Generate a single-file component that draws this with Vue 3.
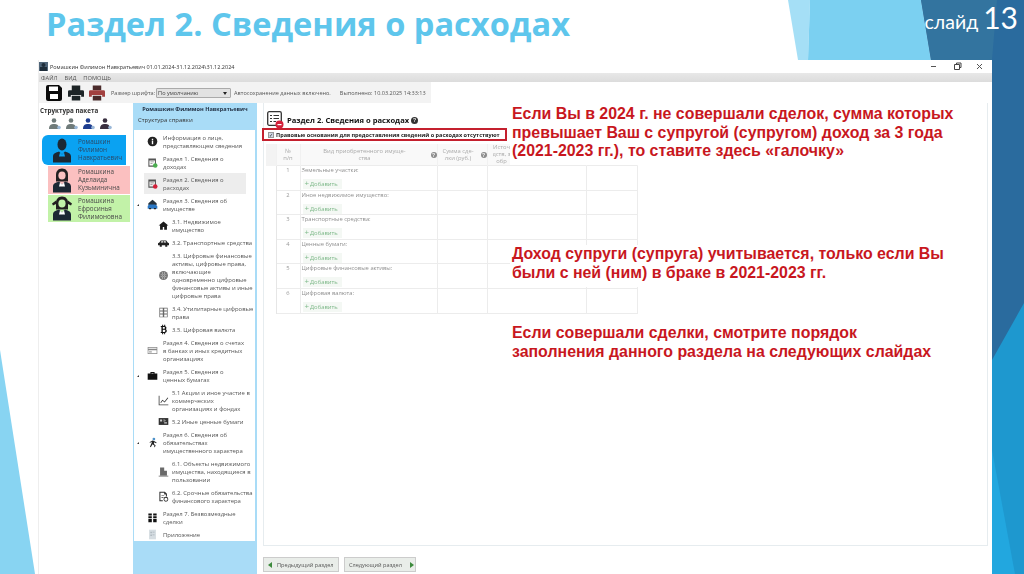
<script setup>
const icons = {
  info: [{ d: 'M8 1a7 7 0 1 0 0 14A7 7 0 0 0 8 1z', f: '#222' }, { d: 'M7 7h2v5H7zM7 4h2v2H7z', f: '#fff' }],
  docG: [{ d: 'M2 2h11v12H2zM3.5 5v7.500h8V5z', f: '#555' }, { d: 'M5 6.500h5v1H5zM5 9h3v1H5z', f: '#888' }, { d: 'M12 9a3.300 3.300 0 1 0 0 6.600A3.300 3.300 0 0 0 12 9z', f: '#4caf50' }],
  docR: [{ d: 'M2 2h11v12H2zM3.500 5v7.500h8V5z', f: '#555' }, { d: 'M5 6.500h5v1H5zM5 9h3v1H5z', f: '#888' }, { d: 'M12 9a3.300 3.300 0 1 0 0 6.600A3.300 3.300 0 0 0 12 9z', f: '#d3203a' }],
  estate: [{ d: 'M8 1l6 5v3H2V6z', f: '#26323c' }, { d: 'M1 10l2-2h9l3 2v4H1z', f: '#2a77c4' }, { d: 'M3 13h3v2H3zM10 13h3v2h-3z', f: '#222' }],
  home: [{ d: 'M8 2L1 8h2v6h4v-4h2v4h4V8h2z', f: '#1c1c1c' }],
  car: [{ d: 'M4 5h8l2 3 2 1v3H0V9l2-1z', f: '#222' }, { d: 'M5 6h2.500v2H4zM8.500 6H11l1 2H8.500z', f: '#fff' }, { d: 'M2.500 11h3v3h-3zM10.500 11h3v3h-3z', f: '#222' }],
  coin: [{ d: 'M8 1.500a6.500 6.500 0 1 0 0 13 6.500 6.500 0 0 0 0-13z', f: '#777' }, { d: 'M4 6h8v1H4zM4 9h8v1H4zM6 3h1v10H6zM9 3h1v10H9z', f: '#bbb' }],
  grid: [{ d: 'M2 1h12v14H2zM3 2v3h4V2zM9 2v3h4V2zM3 6.500v3h4v-3zM9 6.500v3h4v-3zM3 11v3h4v-3zM9 11v3h4v-3z', f: '#666' }],
  btc: [{ d: 'M4 3h2V1h1.500v2H9V1h1.500v2.100c2 .5 2.500 3.400.8 4.500 2.200.9 2 5-1 5.300V15H9v-2H7.500v2H6v-2H4v-1.500h1v-7H4zM7 4.500V7h2c1.500 0 1.500-2.500 0-2.500zM7 8.500v3h2.500c1.600 0 1.600-3 0-3z', f: '#111' }],
  card: [{ d: 'M1 3h14v10H1zM2 4v1.500h12V4zM2 7.500V12h12V7.500z', f: '#888' }, { d: 'M3 9h4v2H3z', f: '#aaa' }],
  bag: [{ d: 'M5 5V3h6v2h4v9H1V5zM6.500 5h3V4.200h-3z', f: '#111' }],
  chart: [{ d: 'M1 1h1.200v12.800H15V15H1z', f: '#444' }, { d: 'M3.500 11l3-4 3 2.500L14 3.500l.9.700-5.200 6.800-3-2.500-2.300 3z', f: '#333' }],
  paper: [{ d: 'M1 3h14v10H1z', f: '#333' }, { d: 'M3 5h3v3H3zM9 9h4v2H9z', f: '#ccc' }, { d: 'M8 4l4 3-4 2z', f: '#888' }],
  run: [{ d: 'M10 1a2 2 0 1 0 0 4 2 2 0 0 0 0-4z', f: '#4f92c9' }, { d: 'M8 5l3 1 3 2-.7 1-2.800-1.500L10 10l2.500 2-1 3-1.200-.3.700-2-3-2-2.500 4.300L4.300 14l2.500-5.500V7L4.500 8.500 3.500 7.500z', f: '#222' }],
  bldg: [{ d: 'M4 2h5v5h4v7H3V2z', f: '#6a6a6a' }, { d: 'M1 14h14v1.500H1z', f: '#888' }],
  docPen: [{ d: 'M2 1h8l3 3v4h-1.500V5H9V2.500H3.500v11H7V15H2z', f: '#333' }, { d: 'M5 6h4v1H5zM5 9h3v1H5z', f: '#333' }, { d: 'M11.500 8.500a3.500 3.500 0 1 0 0 7 3.500 3.500 0 0 0 0-7zm0 1.200a2.300 2.300 0 1 1 0 4.600 2.300 2.300 0 0 1 0-4.600z', f: '#333' }],
  gift: [{ d: 'M2 2h5v3H2zM9 2h5v3H9zM2 6h5v3H2zM9 6h5v3H9zM2 10h5v5H2zM9 10h5v5H9z', f: '#111' }],
  app: [{ d: 'M3 1h10v14H3z', f: '#d6dde2' }, { d: 'M5 4h2v2H5zM5 8h2v2H5zM8 4h3v1H8zM8 8h3v1H8z', f: '#aab4ba' }]
}

const tree = [
  { lines: ['Информация о лице,', 'представляющем сведения'], icon: 'info', lv: 0 },
  { lines: ['Раздел 1. Сведения о', 'доходах'], icon: 'docG', lv: 0 },
  { lines: ['Раздел 2. Сведения о', 'расходах'], icon: 'docR', lv: 0, active: true },
  { lines: ['Раздел 3. Сведения об', 'имуществе'], icon: 'estate', lv: 0, open: true },
  { lines: ['3.1. Недвижимое', 'имущество'], icon: 'home', lv: 1 },
  { lines: ['3.2. Транспортные средства'], icon: 'car', lv: 1 },
  { lines: ['3.3. Цифровые финансовые', 'активы, цифровые права,', 'включающие', 'одновременно цифровые', 'финансовые активы и иные', 'цифровые права'], icon: 'coin', lv: 1 },
  { lines: ['3.4. Утилитарные цифровые', 'права'], icon: 'grid', lv: 1 },
  { lines: ['3.5. Цифровая валюта'], icon: 'btc', lv: 1 },
  { lines: ['Раздел 4. Сведения о счетах', 'в банках и иных кредитных', 'организациях'], icon: 'card', lv: 0 },
  { lines: ['Раздел 5. Сведения о', 'ценных бумагах'], icon: 'bag', lv: 0, open: true },
  { lines: ['5.1 Акции и иное участие в', 'коммерческих', 'организациях и фондах'], icon: 'chart', lv: 1 },
  { lines: ['5.2 Иные ценные бумаги'], icon: 'paper', lv: 1 },
  { lines: ['Раздел 6. Сведения об', 'обязательствах', 'имущественного характера'], icon: 'run', lv: 0, open: true },
  { lines: ['6.1. Объекты недвижимого', 'имущества, находящиеся в', 'пользовании'], icon: 'bldg', lv: 1 },
  { lines: ['6.2. Срочные обязательства', 'финансового характера'], icon: 'docPen', lv: 1 },
  { lines: ['Раздел 7. Безвозмездные', 'сделки'], icon: 'gift', lv: 0 },
  { lines: ['Приложение'], icon: 'app', lv: 0 }
]

const people = [
  { cls: 'blue', lines: ['Ромашкин', 'Филимон', 'Навкратьевич'], woman: false },
  { cls: 'pink', lines: ['Ромашкина', 'Аделаида', 'Кузьминична'], woman: true },
  { cls: 'green', lines: ['Ромашкина', 'Ефросинья', 'Филимоновна'], woman: true, tails: true }
]

const miniColors = ['#6f7b7a', '#6f7b7a', '#1d3d8f', '#3a3040']
const rows = ['Земельные участки:', 'Иное недвижимое имущество:', 'Транспортные средства:', 'Ценные бумаги:', 'Цифровые финансовые активы:', 'Цифровая валюта:']
</script>

<template>
  <div class="slide">
    <svg class="decor" width="1024" height="574" viewBox="0 0 1024 574">
      <polygon points="788,0 810,0 808,60 798,60" fill="#a5dff6" />
      <polygon points="810,0 921,0 931,60 808,60" fill="#7bd0f1" />
      <polygon points="921,0 1024,0 1024,574 992,574 992,60 931,60" fill="#2a6b9e" />
      <polygon points="921,0 997,0 992,60 931,60" fill="#33749f" />
      <polygon points="1024,303 1024,574 992,574 992,360" fill="#1e98cf" />
      <polygon points="992,450 1015,574 992,574" fill="#22a7df" />
      <polygon points="0,350 35,574 0,574" fill="#88d4f2" />
    </svg>

    <header class="head">
      <h1>Раздел 2. Сведения о расходах</h1>
      <div class="slide-no">слайд <span>13</span></div>
    </header>

    <section class="window">
      <div class="titlebar">
        <svg class="app-ico" width="9" height="9" viewBox="0 0 9 9"><rect width="9" height="9" fill="#51667a" /><circle cx="4.500" cy="3" r="2" fill="#1f2d3a" /><rect x="1" y="5" width="7" height="4" fill="#1f2d3a" /></svg>
        <span>Ромашкин Филимон Навкратьевич 01.01.2024-31.12.2024\31.12.2024</span>
        <div class="controls">
          <svg width="60" height="9" viewBox="0 0 60 9"><path d="M0 4.500h5" stroke="#555" /><path d="M23.500 2.500h5v5h-5zM25.500 2.500v-1.500h4.500v4.500h-1.500" fill="none" stroke="#444" /><path d="M46 2l5 5M51 2l-5 5" stroke="#555" /></svg>
        </div>
      </div>
      <nav class="menu"><span>ФАЙЛ</span><span>ВИД</span><span>ПОМОЩЬ</span></nav>
      <div class="toolbar">
        <svg width="16" height="16" viewBox="0 0 16 16"><path d="M0 2a2 2 0 0 1 2-2h11l3 3v11a2 2 0 0 1-2 2H2a2 2 0 0 1-2-2z" fill="#0a0a0a" /><rect x="3" y="1.500" width="9" height="4.500" fill="#fff" /><rect x="4" y="9" width="8" height="5" fill="#fff" /></svg>
        <svg class="print1" width="16" height="16" viewBox="0 0 17 16"><path d="M4 0h9v5H4zM1.500 5h14a1.500 1.500 0 0 1 1.500 1.500V12h-3v-2H3v2H0V6.500A1.500 1.500 0 0 1 1.500 5zM4 11h9v5H4z" fill="#1d2426" /></svg>
        <svg width="16" height="16" viewBox="0 0 17 16"><path d="M4 0h9v5H4zM4 11h9v5H4z" fill="#4a2a2a" /><path d="M1.500 5h14a1.500 1.500 0 0 1 1.500 1.500V12h-3v-2H3v2H0V6.500A1.500 1.500 0 0 1 1.500 5z" fill="#a2403f" /></svg>
        <span class="tb-label">Размер шрифта:</span>
        <div class="select"><span>По умолчанию</span><i></i></div>
        <span class="tb-text">Автосохранение данных включено.</span>
        <span class="tb-text done">Выполнено: 10.03.2025 14:33:13</span>
      </div>

      <div class="body">
        <aside class="packs">
          <div class="packs-title">Структура пакета</div>
          <div class="minis">
            <svg v-for="(c, i) in miniColors" :key="i" width="13" height="12" viewBox="0 0 13 12">
              <circle cx="6" cy="2.500" r="2.300" :fill="c" />
              <path d="M1 11c0-4 2-5 5-5s5 1 5 5z" :fill="c" />
              <circle cx="11" cy="9.500" r="1.800" fill="#9bb8d8" />
            </svg>
          </div>
          <div v-for="p in people" :key="p.lines[1]" class="person" :class="p.cls">
            <svg width="20" height="25" viewBox="0 0 20 24">
              <template v-if="p.woman">
                <path d="M10 0c4 0 6 3 6 6v7H4V6c0-3 2-6 6-6z" fill="#231f20" />
                <ellipse cx="10" cy="7" rx="3.600" ry="4" :fill="p.cls === 'pink' ? '#fbc0c0' : '#c2f2a8'" />
                <path v-if="p.tails" d="M4 4L0 7l1 2 4-2zM16 4l4 3-1 2-4-2z" fill="#231f20" />
              </template>
              <template v-else>
                <ellipse cx="10" cy="6" rx="4.500" ry="6" fill="#1c2733" />
              </template>
              <path d="M1 24v-6c0-3 3-4 6-5l3 3 3-3c3 1 6 2 6 5v6z" fill="#1c2733" />
              <path d="M8 14l2 2 2-2 1 4H7z" :fill="p.woman ? '#fff' : '#0aa2f2'" />
            </svg>
            <div class="p-text"><span v-for="l in p.lines" :key="l">{{ l }}</span></div>
          </div>
        </aside>

        <aside class="side">
          <div class="side-head">
            <b>Ромашкин Филимон Навкратьевич</b>
            <span>Структура справки</span>
          </div>
          <div class="tree">
            <div v-for="it in tree" :key="it.lines[0]" class="item" :class="[`lv${it.lv}`, { active: it.active }]">
              <i v-if="it.open" class="arrow"></i>
              <svg class="t-ico" width="11" height="11" viewBox="0 0 16 16">
                <path v-for="(p, i) in icons[it.icon]" :key="i" :d="p.d" :fill="p.f" fill-rule="evenodd" />
              </svg>
              <div class="t-text"><span v-for="l in it.lines" :key="l">{{ l }}</span></div>
            </div>
          </div>
        </aside>

        <main class="main">
          <div class="pane">
            <div class="pane-title">
              <svg width="17" height="18" viewBox="0 0 17 18">
                <rect x="0.700" y="0.700" width="13.600" height="13.600" rx="1.500" fill="none" stroke="#333" stroke-width="1.300" />
                <path d="M3 4h2v1H3zM6.500 4H12v1H6.500zM3 7h2v1H3zM6.500 7H12v1H6.500zM3 10h2v1H3zM6.500 10H9v1H6.500z" fill="#333" />
                <circle cx="12.500" cy="13.500" r="4" fill="#d3203a" />
                <rect x="10.500" y="13" width="4" height="1.200" fill="#fff" />
              </svg>
              <b>Раздел 2. Сведения о расходах</b>
              <em class="q big">?</em>
            </div>
            <label class="legal">
              <span class="check">✓</span>
              <b>Правовые основания для предоставления сведений о расходах отсутствуют</b>
            </label>
            <table class="grid">
              <colgroup><col class="c0" /><col class="c1" /><col class="c2" /><col class="c3" /><col class="c4" /><col class="c5" /></colgroup>
              <thead>
                <tr>
                  <th></th>
                  <th>№<br />п/п</th>
                  <th><div class="th-q"><span>Вид приобретенного имуще-<br />ства</span><em class="q">?</em></div></th>
                  <th><div class="th-q"><span>Сумма сде-<br />лки (руб.)</span><em class="q">?</em></div></th>
                  <th class="src"><div>Источ<br />дств, з<br />обр</div></th>
                  <th></th>
                </tr>
              </thead>
              <tbody>
                <tr v-for="(r, i) in rows" :key="r">
                  <td></td>
                  <td class="num">{{ i + 1 }}</td>
                  <td class="cell">
                    <div>{{ r }}</div>
                    <span class="add"><i>+</i>Добавить</span>
                  </td>
                  <td></td>
                  <td></td>
                  <td></td>
                </tr>
              </tbody>
            </table>
          </div>
          <div class="nav-btns">
            <button class="prev"><i class="tri left"></i>Предыдущий раздел</button>
            <button class="next">Следующий раздел<i class="tri right"></i></button>
          </div>
        </main>
      </div>
    </section>

    <p class="note n1">Если Вы в 2024 г. не совершали сделок, сумма которых<br />превышает Ваш с супругой (супругом) доход за 3 года<br />(2021-2023 гг.), то ставите здесь «галочку»</p>
    <p class="note n2">Доход супруги (супруга) учитывается, только если Вы<br />были с ней (ним) в браке в 2021-2023 гг.</p>
    <p class="note n3">Если совершали сделки, смотрите порядок<br />заполнения данного раздела на следующих слайдах</p>
  </div>
</template>

<style scoped>
.slide {
  position: relative;
  width: 1024px;
  height: 574px;
  overflow: hidden;
  background: #fff;
  font-family: "Open Sans", "Liberation Sans", sans-serif;
}
.decor { position: absolute; left: 0; top: 0; }
.head {
  position: relative;
  height: 60px;
}
.head h1 {
  margin: 0;
  padding: 3px 0 0 46px;
  font-size: 32.600px;
  line-height: 41px;
  font-weight: 700;
  color: #5ec6ec;
}
.slide-no {
  position: absolute;
  right: 6px;
  top: 0;
  color: #fff;
  font-size: 19.500px;
  line-height: 34px;
  font-family: Lato, sans-serif;
}
.slide-no span { font-size: 30px; }

.window {
  position: relative;
  margin-left: 38px;
  width: 954px;
  height: 514px;
  background: #fff;
  border-left: 1px solid #eee;
  box-sizing: border-box;
  display: flex;
  flex-direction: column;
  filter: blur(0.4px);
  color: #444;
  font-size: 6.300px;
}
.titlebar {
  height: 13px;
  display: flex;
  align-items: center;
  gap: 2px;
  color: #333;
  font-size: 5.500px;
  white-space: nowrap;
}
.app-ico { flex: none; }
.controls { margin-left: auto; margin-right: 1px; display: flex; }
.menu {
  height: 9px;
  display: flex;
  align-items: center;
  gap: 7px;
  padding-left: 2px;
  background: linear-gradient(#e8e8e8, #dcdcdc);
  color: #555;
  font-size: 5.700px;
}
.toolbar {
  width: 392px;
  height: 21px;
  box-sizing: border-box;
  display: flex;
  align-items: center;
  gap: 5px;
  padding-left: 7px;
  background: #f3f3f3;
  white-space: nowrap;
  color: #555;
  font-size: 5.560px;
}
.toolbar svg { flex: none; }
.print1 { margin-left: 1px; }
.tb-label { flex: none; margin-left: 1px; }
.select {
  flex: none;
  width: 75px;
  height: 10px;
  box-sizing: border-box;
  margin-left: -4px;
  border: 1px solid #aaa;
  border-radius: 1px;
  background: #e2e2e2;
  display: flex;
  align-items: center;
  justify-content: space-between;
  padding: 0 3px 0 1px;
  color: #444;
}
.select i { border: 2px solid transparent; border-top: 3px solid #222; margin-top: 3px; }
.tb-text { flex: none; margin-left: -2px; }
.done { margin-left: 4px; }

.body { flex: 1; min-height: 0; display: flex; }
.packs { width: 94px; flex: none; }
.packs-title { padding: 3px 0 0 1px; font-weight: 700; color: #333; line-height: 9px; font-size: 6.300px; }
.minis { display: flex; gap: 4px; padding: 3px 0 0 9px; height: 14px; }
.minis svg { display: block; }
.person {
  display: flex;
  align-items: center;
  box-sizing: border-box;
  gap: 5px;
  color: #4a4a4a;
}
.person svg { flex: none; }
.p-text span { display: block; line-height: 8px; }
.blue {
  margin: 3px 7px 1px 3px;
  height: 30px;
  padding-left: 10px;
  background: #0aa2f2;
  border-radius: 6px 0 0 6px;
  color: #2b4a6a;
}
.pink { margin: 0 3px 1px 9px; height: 28px; padding-left: 4px; background: #fbc0c0; }
.green { margin: 0 3px 0 9px; height: 27px; padding-left: 4px; background: #c2f2a8; }
.blue .p-text { margin-left: 1px; }
.pink .p-text, .green .p-text { margin-left: 1px; }

.side {
  width: 124px;
  flex: none;
  background: #a9dcf7;
  display: flex;
  flex-direction: column;
  padding-bottom: 33px;
  box-sizing: border-box;
  height: 471px;
}
.side-head { height: 27px; flex: none; padding: 2px 0 0 5px; box-sizing: border-box; color: #333; }
.side-head b { display: block; text-align: center; color: #1f2d40; line-height: 9px; font-size: 5.600px; padding-right: 5px; white-space: nowrap; }
.side-head span { display: block; margin-top: 2px; line-height: 9px; font-size: 6px; }
.tree {
  flex: 1;
  margin: 0 2px 0 1px;
  background: #fff;
  padding-top: 1px;
  box-sizing: border-box;
  overflow: hidden;
}
.item {
  position: relative;
  display: flex;
  align-items: center;
  padding: 2.500px 0;
  color: #555;
  white-space: nowrap;
}
.item.lv0 { margin-left: 10px; width: 99px; padding-left: 3px; }
.item.lv1 { margin-left: 24px; padding-right: 0; }
.item.active { background: #ededed; }
.t-ico { flex: none; margin: -2px 5px -2px 0; }
.lv1 .t-ico { margin-right: 3px; }
.t-text span { display: block; line-height: 8px; font-size: 5.900px; }
.arrow {
  position: absolute;
  left: -7px;
  top: 50%;
  margin-top: -1px;
  border-left: 2.500px solid transparent;
  border-bottom: 2.500px solid #333;
}

.main { flex: 1; min-width: 0; padding-left: 6px; }
.pane {
  height: 443px;
  width: 725px;
  box-sizing: border-box;
  border: 1px solid #e6ecef;
  border-top: 0;
  padding-top: 8px;
}
.pane-title {
  display: flex;
  align-items: center;
  height: 18px;
  padding-left: 3px;
  color: #111;
  font-size: 7.600px;
}
.pane-title svg { flex: none; }
.pane-title b { margin-left: 3px; font-family: "Open Sans", sans-serif; }
.q {
  display: inline-block;
  flex: none;
  width: 6px;
  height: 6px;
  border-radius: 50%;
  background: #8c8c8c;
  color: #fff;
  font: 700 5px/6px "Liberation Sans", sans-serif;
  text-align: center;
}
.q.big { width: 7px; height: 7px; line-height: 7px; background: #333; margin-left: 2px; }
.legal {
  display: flex;
  align-items: center;
  box-sizing: border-box;
  width: 245px;
  height: 13px;
  margin: -1px 0 0 -2px;
  border: 2px solid #c4202e;
  padding-left: 4px;
  color: #222;
  white-space: nowrap;
}
.legal b { font-size: 5.550px; margin-left: 2px; }
.check {
  flex: none;
  width: 6px;
  height: 6px;
  background: #cfd8e6;
  border: 1px solid #999;
  box-sizing: border-box;
  font-size: 5px;
  line-height: 4px;
  color: #222;
  text-align: center;
}
.grid {
  margin: 3px 0 0 2px;
  width: 371px;
  border-collapse: collapse;
  table-layout: fixed;
  color: #999;
  font-size: 5.800px;
}
.c0 { width: 10px; }
.c1 { width: 24px; }
.c2 { width: 137px; }
.c3 { width: 50px; }
.c4 { width: 99px; }
.c5 { width: 51px; }
.grid th {
  height: 21px;
  padding: 0;
  font-weight: 400;
  line-height: 7px;
  background: #f9f9f9;
  border-right: 1px solid #f1f1f1;
  text-align: center;
  color: #aaa;
}
.grid th:first-child { background: #f3f3f3; }
.th-q { display: flex; align-items: center; justify-content: center; gap: 2px; }
.th-q span { flex: 1; }
.src { overflow: hidden; text-align: left; }
.src div { width: 18px; margin-left: 5px; overflow: hidden; white-space: nowrap; text-align: center; }
.grid td {
  height: 24.600px;
  box-sizing: border-box;
  padding: 0;
  border: 1px solid #ececec;
  vertical-align: top;
}
.grid td:first-child { border: 0; border-right: 1px solid #e6e6e6; }
.num { text-align: center; padding-top: 1px; line-height: 8px; }
.grid td.cell { padding: 0 1px; line-height: 8px; color: #8f8f8f; white-space: nowrap; }
.add {
  display: block;
  width: 39px;
  margin: 5px 0 0 1px;
  background: #f4f8f4;
  color: #7fb98a;
  line-height: 9px;
  font-size: 5.900px;
  padding-left: 2px;
  box-sizing: border-box;
}
.add i { font-style: normal; font-size: 8px; margin-right: 1px; line-height: 8px; }
.nav-btns { display: flex; gap: 5px; margin-top: 11px; }
.nav-btns button {
  height: 15px;
  padding: 0 4px;
  display: flex;
  align-items: center;
  gap: 5px;
  border: 1px solid #ccc;
  background: #e9ede9;
  color: #555;
  font: 5.600px "Open Sans", sans-serif;
  white-space: nowrap;
}
.prev { width: 76px; }
.next { width: 72px; }
.tri { flex: none; border: 3px solid transparent; }
.tri.left { border-right: 4px solid #3d8a3d; border-left: 0; }
.tri.right { border-left: 4px solid #3d8a3d; border-right: 0; margin-left: 3px; }

.note {
  position: absolute;
  left: 510px;
  margin: 0;
  padding: 0 0 0 2px;
  background: #fff;
  color: #c8171e;
  font: 700 15.900px/18.600px "Liberation Sans", sans-serif;
  white-space: nowrap;
}
.n1 { top: 105px; height: 60px; }
.n2 { top: 245px; height: 42px; }
.n3 { top: 324px; }
</style>
